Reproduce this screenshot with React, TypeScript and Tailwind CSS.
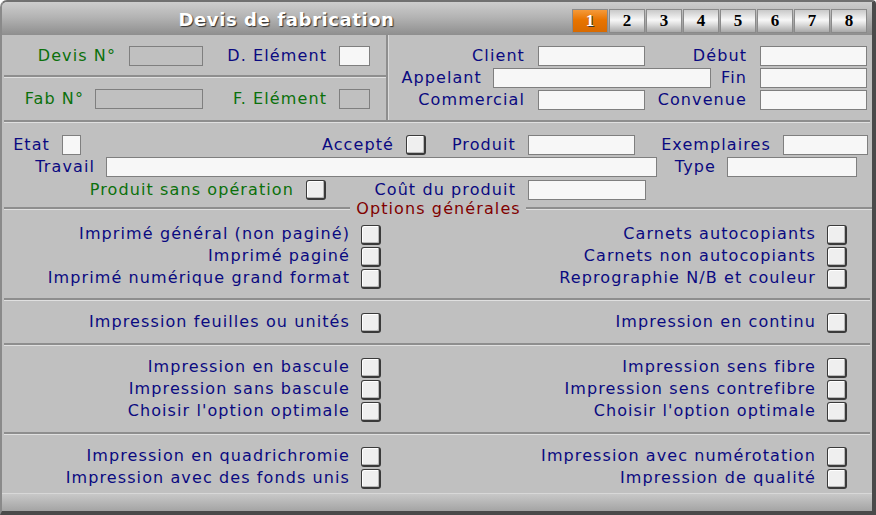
import React from "react";

const FONT = { fontFamily: '"DejaVu Sans", Verdana, sans-serif' };

function Input({ w, gray }: { w: string; gray?: boolean }) {
  return (
    <div
      className={`h-[20px] shrink-0 border border-[#7f7f7f] ${w} ${
        gray ? "bg-[#c0c0c0]" : "bg-[#f7f7f7]"
      }`}
    />
  );
}

function Label({
  w,
  children,
  green,
}: {
  w: string;
  children: React.ReactNode;
  green?: boolean;
}) {
  return (
    <div
      className={`shrink-0 whitespace-nowrap text-right leading-[20px] ${w} ${
        green ? "text-[#0b700b]" : "text-[#0a0a80]"
      }`}
    >
      <span className="-mr-[1px]">{children}</span>
    </div>
  );
}

function Check({ ml }: { ml: string }) {
  return (
    <div
      className={`mt-[2px] h-[20px] w-[20px] shrink-0 rounded-[3px] border border-b-2 border-r-2 border-[#3a3a3a] bg-[#efefef] shadow-[inset_1px_1px_0_#ffffff,inset_-1px_-1px_0_#b8b8b8] ${ml}`}
    />
  );
}

function HSep({ className }: { className?: string }) {
  return (
    <div
      className={`h-[3px] shrink-0 border-t-2 border-[#8e8e8e] bg-[#e0e0e0] ${className ?? ""}`}
    />
  );
}

function OptionRow({ left, right }: { left: string; right: string }) {
  return (
    <div className="flex h-[22px] items-center">
      <Label w="w-[347px]">{left}</Label>
      <Check ml="ml-[12px]" />
      <Label w="w-[434px]">{right}</Label>
      <Check ml="ml-[12px]" />
    </div>
  );
}

function Tab({ n, active }: { n: number; active?: boolean }) {
  return (
    <div
      className={`flex h-[24px] w-[36px] items-center justify-center border border-[#8a8a8a] text-[17px] font-bold tracking-normal ${
        active
          ? "bg-[linear-gradient(#f59a3a,#e87400_45%,#d86a00)] text-white [text-shadow:1px_1px_0_#333]"
          : "bg-[linear-gradient(#c9c9c9,#f7f7f7_45%,#e4e4e4_60%,#a9a9a9)] text-black"
      }`}
      style={{ fontFamily: '"Liberation Serif", "Times New Roman", serif' }}
    >
      {n}
    </div>
  );
}

export default function App() {
  const block1: [string, string][] = [
    ["Imprimé général (non paginé)", "Carnets autocopiants"],
    ["Imprimé paginé", "Carnets non autocopiants"],
    ["Imprimé numérique grand format", "Reprographie N/B et couleur"],
  ];
  const block2: [string, string][] = [
    ["Impression feuilles ou unités", "Impression en continu"],
  ];
  const block3: [string, string][] = [
    ["Impression en bascule", "Impression sens fibre"],
    ["Impression sans bascule", "Impression sens contrefibre"],
    ["Choisir l'option optimale", "Choisir l'option optimale"],
  ];
  const block4: [string, string][] = [
    ["Impression en quadrichromie", "Impression avec numérotation"],
    ["Impression avec des fonds unis", "Impression de qualité"],
  ];

  return (
    <div
      className="flex h-[515px] w-[876px] flex-col overflow-hidden rounded-tl-[7px] rounded-tr-[4px] border-b-4 border-l-2 border-r-4 border-t-2 border-b-[#4a4a4a] border-l-[#8a8a8a] border-r-[#4a4a4a] border-t-[#707070] bg-[#c0c0c0] text-[16px] tracking-[1.1px]"
      style={FONT}
    >
      {/* title bar */}
      <div className="flex h-[33px] shrink-0 bg-[linear-gradient(#cdcdcd,#b4b4b4_45%,#8e8e8e)]">
        <div className="flex w-[568px] items-center justify-center pt-[1px]">
          <span className="-mr-[1px] whitespace-nowrap text-[18px] font-bold tracking-[0.6px] text-white [text-shadow:1px_1px_1px_#303030]">
            Devis de fabrication
          </span>
        </div>
        <div className="ml-[2px] mt-[7px] flex gap-[1px]">
          {[1, 2, 3, 4, 5, 6, 7, 8].map((n) => (
            <Tab key={n} n={n} active={n === 1} />
          ))}
        </div>
      </div>

      {/* top section */}
      <div className="flex h-[85px] shrink-0">
        <div className="flex w-[384px] flex-col">
          <div className="flex h-[40px] items-start pt-[11px]">
            <Label w="w-[113px]" green>
              Devis N°
            </Label>
            <div className="ml-[14px]">
              <Input w="w-[74px]" gray />
            </div>
            <Label w="w-[123px]">D. Elément</Label>
            <div className="ml-[13px]">
              <Input w="w-[31px]" />
            </div>
          </div>
          <HSep className="ml-[2px]" />
          <div className="flex h-[42px] items-start pt-[11px]">
            <Label w="w-[81px]" green>
              Fab N°
            </Label>
            <div className="ml-[12px]">
              <Input w="w-[108px]" gray />
            </div>
            <Label w="w-[123px]" green>
              F. Elément
            </Label>
            <div className="ml-[13px]">
              <Input w="w-[31px]" gray />
            </div>
          </div>
        </div>
        <div className="w-[3px] shrink-0 border-l-2 border-[#8e8e8e] bg-[#dcdcdc]" />
        <div className="flex flex-1 flex-col pt-[11px]">
          <div className="flex h-[22px]">
            <Label w="w-[135px]">Client</Label>
            <div className="ml-[14px]">
              <Input w="w-[107px]" />
            </div>
            <Label w="w-[101px]">Début</Label>
            <div className="ml-[14px]">
              <Input w="w-[107px]" />
            </div>
          </div>
          <div className="flex h-[22px]">
            <Label w="w-[92px]">Appelant</Label>
            <div className="ml-[12px]">
              <Input w="w-[218px]" />
            </div>
            <Label w="w-[35px]">Fin</Label>
            <div className="ml-[14px]">
              <Input w="w-[107px]" />
            </div>
          </div>
          <div className="flex h-[22px]">
            <Label w="w-[135px]">Commercial</Label>
            <div className="ml-[14px]">
              <Input w="w-[107px]" />
            </div>
            <Label w="w-[101px]">Convenue</Label>
            <div className="ml-[14px]">
              <Input w="w-[107px]" />
            </div>
          </div>
        </div>
      </div>

      <HSep className="mx-[2px]" />

      {/* section 2 */}
      <div className="flex shrink-0 flex-col pt-[12px]">
        <div className="flex h-[22px] items-start">
          <Label w="w-[47px]">Etat</Label>
          <div className="ml-[13px]">
            <Input w="w-[19px]" />
          </div>
          <Label w="w-[312px]">Accepté</Label>
          <div className="ml-[13px] -mt-[2px]">
            <Check ml="ml-0" />
          </div>
          <Label w="w-[89px]">Produit</Label>
          <div className="ml-[13px]">
            <Input w="w-[107px]" />
          </div>
          <Label w="w-[135px]">Exemplaires</Label>
          <div className="ml-[13px]">
            <Input w="w-[85px]" />
          </div>
        </div>
        <div className="flex h-[23px] items-start">
          <Label w="w-[92px]">Travail</Label>
          <div className="ml-[12px]">
            <Input w="w-[551px]" />
          </div>
          <Label w="w-[58px]">Type</Label>
          <div className="ml-[12px]">
            <Input w="w-[130px]" />
          </div>
        </div>
        <div className="flex h-[20px] items-start">
          <Label w="w-[291px]" green>
            Produit sans opération
          </Label>
          <div className="ml-[13px] -mt-[2px]">
            <Check ml="ml-0" />
          </div>
          <Label w="w-[189px]">Coût du produit</Label>
          <div className="ml-[13px]">
            <Input w="w-[118px]" />
          </div>
        </div>
      </div>

      {/* options header */}
      <div className="flex h-[17px] shrink-0 items-center">
        <HSep className="ml-[2px] min-w-0 flex-1" />
        <span className="mx-[6px] shrink-0 whitespace-nowrap leading-[17px] text-[#800000]">
          <span className="-mr-[1px]">Options générales</span>
        </span>
        <HSep className="min-w-0 flex-1" />
      </div>

      <div className="flex shrink-0 flex-col pb-[9px] pt-[6px]">
        {block1.map(([l, r]) => (
          <OptionRow key={l + r} left={l} right={r} />
        ))}
      </div>
      <HSep className="mx-[2px]" />
      <div className="flex shrink-0 flex-col py-[10px]">
        {block2.map(([l, r]) => (
          <OptionRow key={l + r} left={l} right={r} />
        ))}
      </div>
      <HSep className="mx-[2px]" />
      <div className="flex shrink-0 flex-col py-[10px]">
        {block3.map(([l, r], i) => (
          <OptionRow key={i} left={l} right={r} />
        ))}
      </div>
      <HSep className="mx-[2px]" />
      <div className="flex shrink-0 flex-col pt-[10px]">
        {block4.map(([l, r]) => (
          <OptionRow key={l + r} left={l} right={r} />
        ))}
      </div>

      <div className="mt-auto h-[18px] shrink-0 border-t border-[#d8d8d8] bg-[linear-gradient(#c8c8c8,#a4a4a4)]" />
    </div>
  );
}
